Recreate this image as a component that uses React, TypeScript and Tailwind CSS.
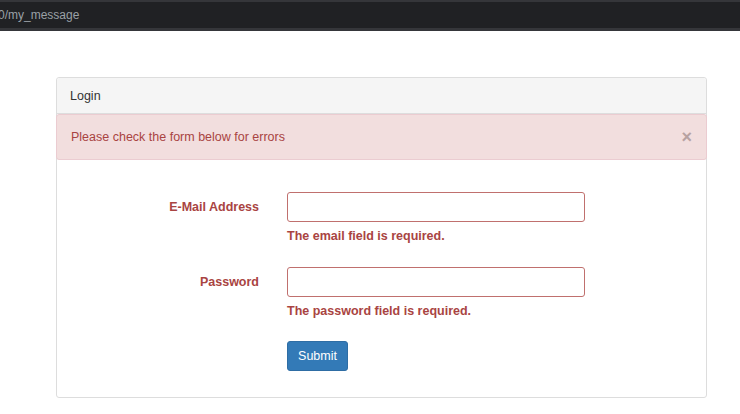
export default function App() {
  return (
    <div className="min-h-[414px] bg-white font-['Liberation_Sans',Arial,sans-serif] text-[12.5px] text-[#333]">
      {/* browser address bar strip */}
      <div className="h-[31px] bg-[#202124] border-t-2 border-t-[#35363a] border-b-[3px] border-b-[#35363a] flex items-center">
        <span className="text-[12px] text-[#9aa0a6] -ml-[2px]">0/my_message</span>
      </div>

      <div className="ml-[56px] mt-[46px] w-[651px] border border-[#ddd] rounded-[3px] bg-white">
        <div className="h-[36px] bg-[#f5f5f5] border-b border-[#ddd] rounded-t-[3px] flex items-center px-[13px] pt-[2px]">
          Login
        </div>

        <div className="-mx-px h-[46px] bg-[#f2dede] border border-[#ebccd1] rounded-[3px] flex items-center justify-between pl-[14px] pr-[14px] text-[#a94442]">
          <span>Please check the form below for errors</span>
          <span className="text-[18px] font-bold leading-none text-[#b7a2a2]">×</span>
        </div>

        <form className="pt-[32px] pb-[26px]" onSubmit={(e) => e.preventDefault()}>
          <div className="flex items-start mb-[23px]">
            <label className="w-[202px] text-right font-bold text-[#a94442] pt-[7px] leading-[16px]">
              E-Mail Address
            </label>
            <div className="ml-[28px] w-[298px]">
              <input
                type="email"
                className="block w-full h-[30px] border border-[#c0706e] rounded-[3px] outline-none px-2"
              />
              <div className="mt-[6px] leading-[16px] font-bold text-[#a94442]">The email field is required.</div>
            </div>
          </div>

          <div className="flex items-start mb-[22px]">
            <label className="w-[202px] text-right font-bold text-[#a94442] pt-[7px] leading-[16px]">
              Password
            </label>
            <div className="ml-[28px] w-[298px]">
              <input
                type="password"
                className="block w-full h-[30px] border border-[#c0706e] rounded-[3px] outline-none px-2"
              />
              <div className="mt-[6px] leading-[16px] font-bold text-[#a94442]">The password field is required.</div>
            </div>
          </div>

          <div className="flex">
            <div className="w-[202px]" />
            <button
              type="submit"
              className="ml-[28px] h-[30px] w-[61px] bg-[#337ab7] border border-[#2e6da4] rounded-[3px] text-white"
            >
              Submit
            </button>
          </div>
        </form>
      </div>
    </div>
  )
}
